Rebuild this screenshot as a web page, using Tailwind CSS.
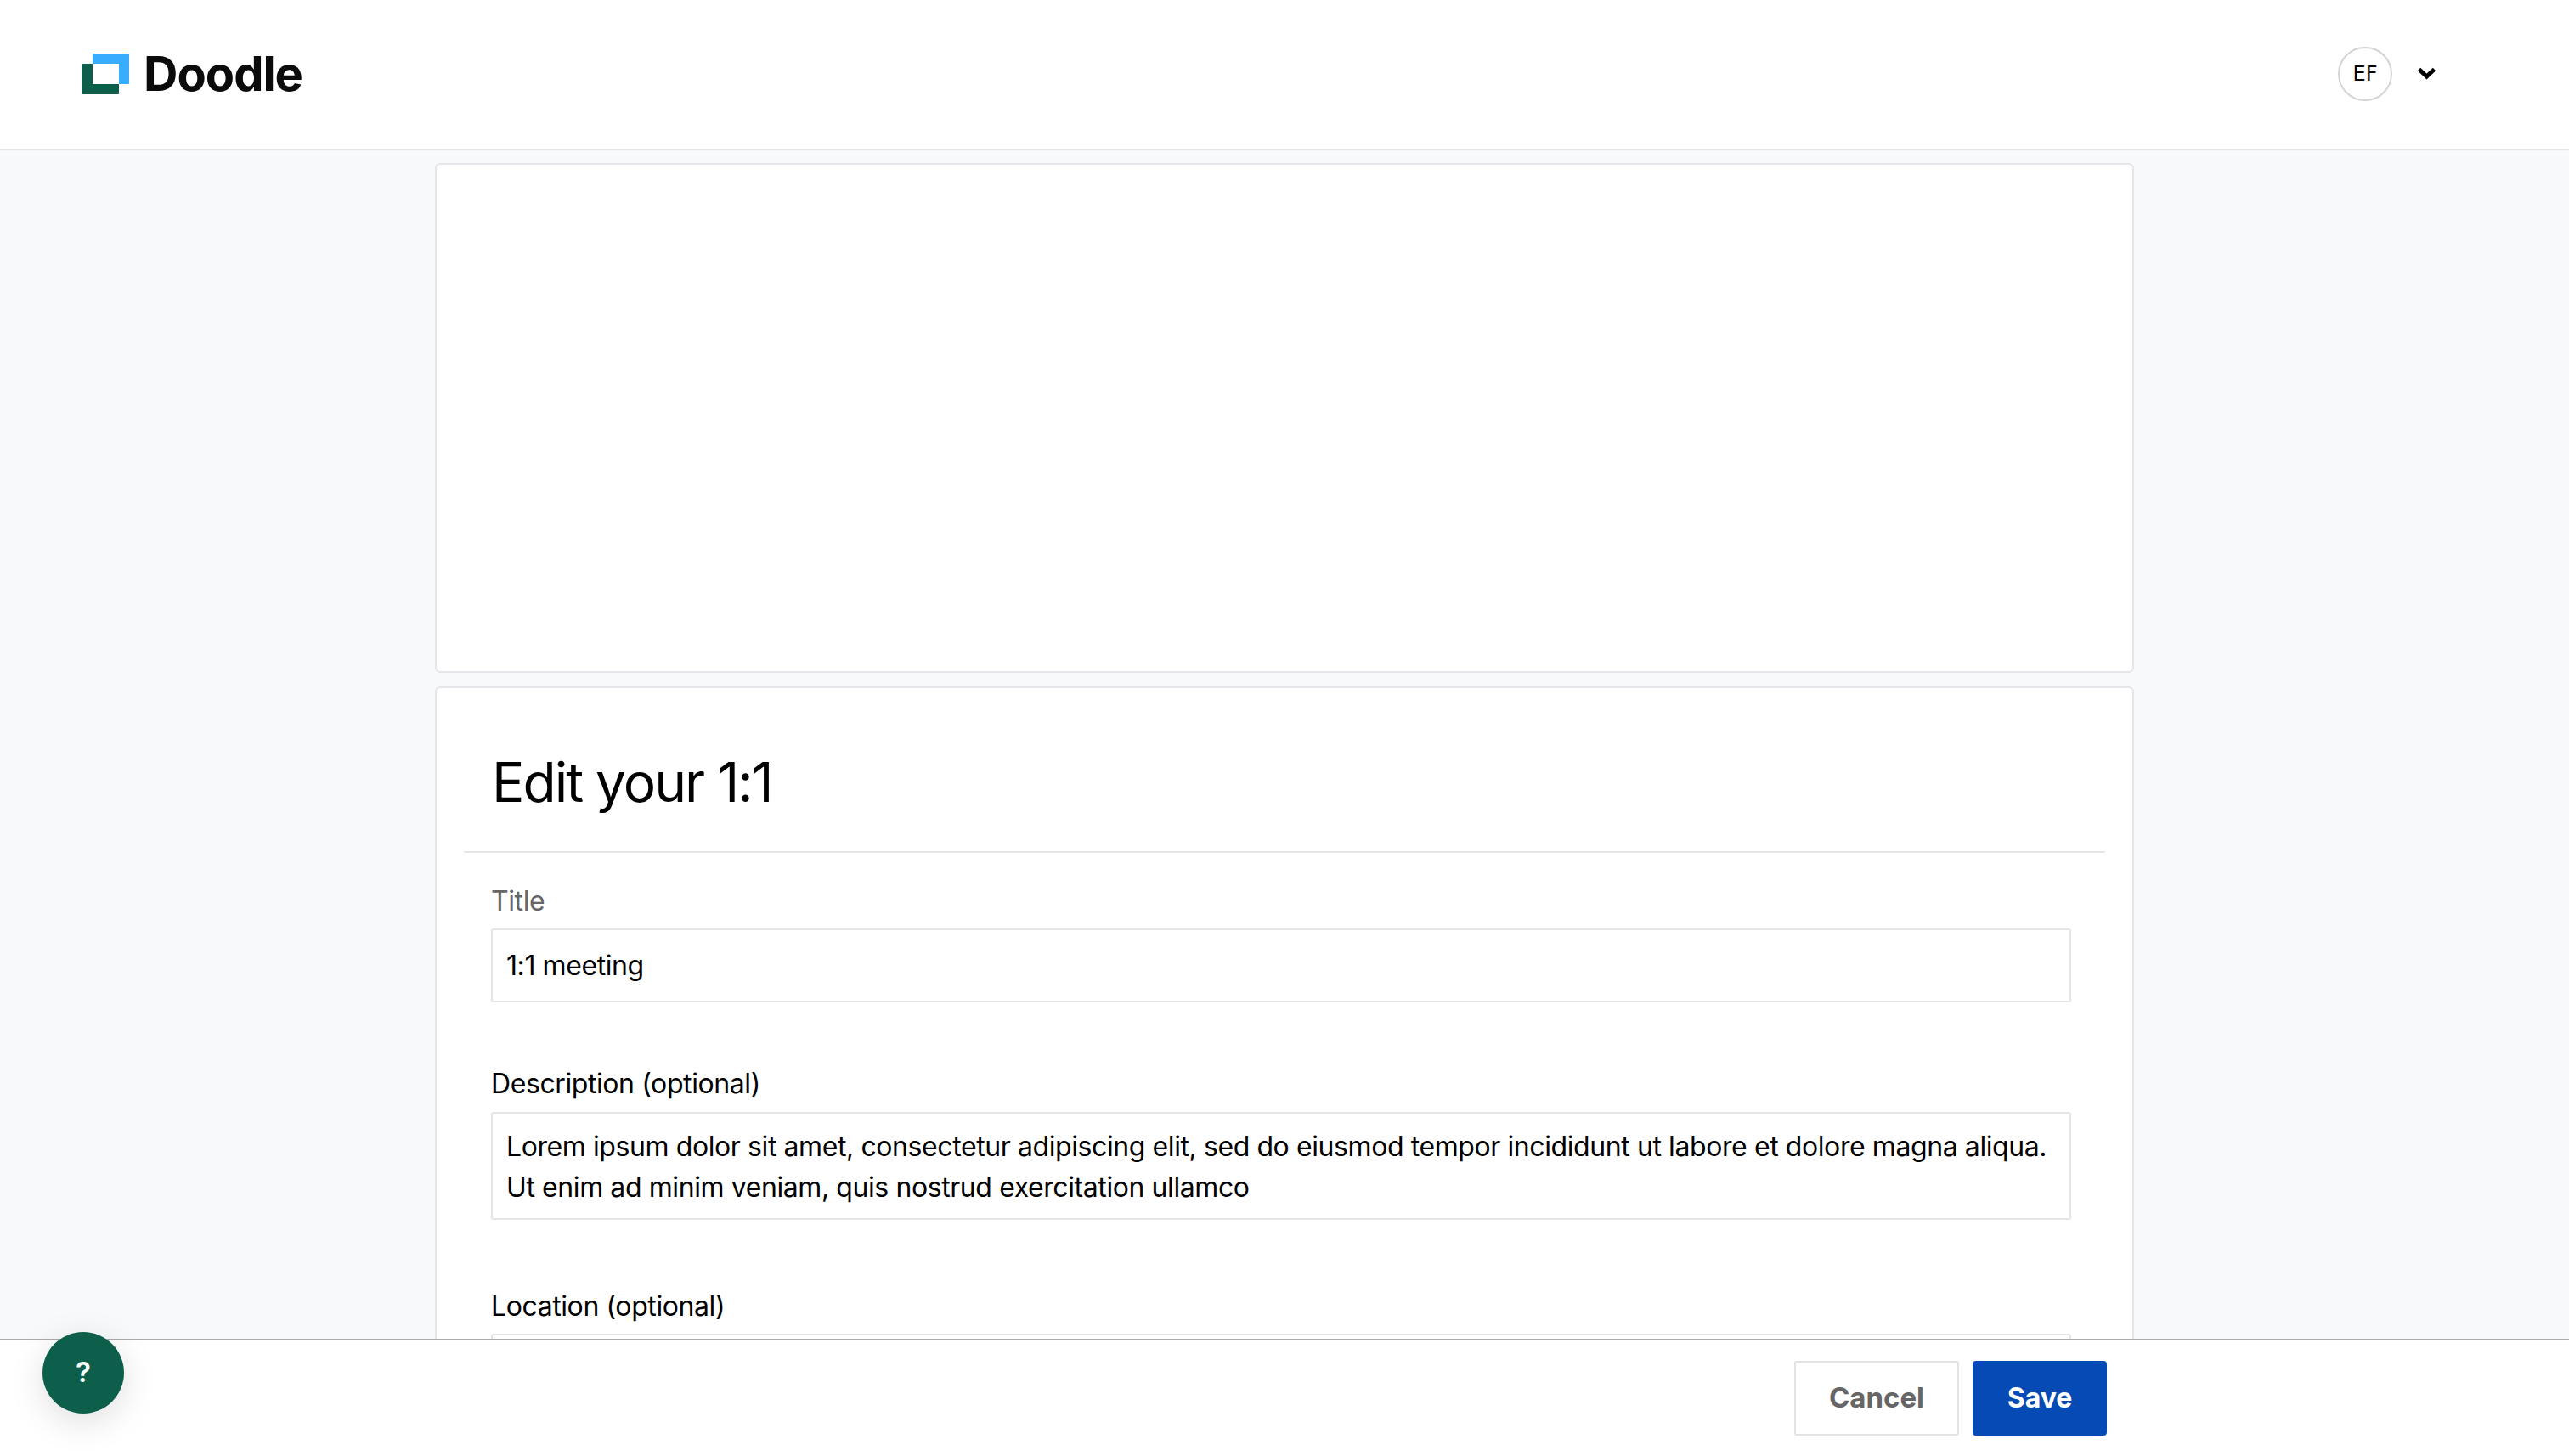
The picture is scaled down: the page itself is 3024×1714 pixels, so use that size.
<!DOCTYPE html>
<html lang="en">
<head>
<meta charset="utf-8">
<title>Doodle - Edit your 1:1</title>
<script src="https://cdn.jsdelivr.net/npm/@tailwindcss/browser@4"></script>
</head>
<body class="font-['Inter',sans-serif] text-black bg-[#f8f9fa]">
<div class="relative h-[1714px] w-[3024px] overflow-hidden flex flex-col">

    <!-- header -->
    <header class="h-[177px] shrink-0 bg-white border-b-2 border-[#e3e5e8] flex items-center justify-between pl-[96px] pr-[156px] pb-[2px]">
        <div class="flex items-center">
            <svg class="w-[56px] h-[48px]" viewBox="0 0 56 48">
                <path d="M0 13a1 1 0 0 1 1-1h43v35a1 1 0 0 1-1 1H1a1 1 0 0 1-1-1z" fill="#0d5f4b"/>
                <path d="M13 1a1 1 0 0 1 1-1h41a1 1 0 0 1 1 1v34a1 1 0 0 1-1 1H13z" fill="#38acff"/>
                <rect x="13" y="12" width="31" height="24" fill="#fff"/>
            </svg>
            <span class="ml-[17px] text-[56px] leading-none font-bold tracking-[-1px] text-[#0b0b0b]">Doodle</span>
        </div>
        <div class="flex items-center gap-[29px]">
            <div class="w-[64px] h-[64px] rounded-full border-2 border-[#d4d4d4] flex items-center justify-center text-[24px] font-['DejaVu_Sans',sans-serif]">EF</div>
            <svg class="w-[23px] h-[15px]" viewBox="0 0 23 15"><path d="M2.5 2.5 11.5 11 20.5 2.5" fill="none" stroke="#000" stroke-width="5"/></svg>
        </div>
    </header>

    <!-- scrolling content -->
    <main class="flex-1 min-h-0 overflow-hidden pt-[15px]">
        <div class="w-[2000px] mx-auto flex flex-col gap-[16px]">
            <div class="h-[600px] bg-white border-2 border-[#e3e5e8] rounded-[6px]"></div>
            <section class="bg-white border-2 border-[#e3e5e8] rounded-[6px] px-[32px] pb-[40px]">
                <div class="border-b-2 border-[#e3e5e8] pl-[33px] pt-[73px] pb-[43px]">
                    <h1 class="text-[64px] leading-[76px] tracking-[-2px]">Edit your 1:1</h1>
                </div>
                <form class="pl-[32px] pr-[40px] pt-[33px] text-[32px] tracking-[-0.41px]">
                    <label class="block leading-[48px] mb-[8px] text-[#666]">Title</label>
                    <div class="h-[87px] border-2 border-[#e3e5e8] rounded-[3px] flex items-center px-[16px]">1:1 meeting</div>
                    <label class="block leading-[48px] mt-[72px] mb-[9px]">Description (optional)</label>
                    <div class="h-[127px] border-2 border-[#e3e5e8] rounded-[3px] px-[16px] py-[15px] leading-[48px]">
                        <p class="whitespace-nowrap">Lorem ipsum dolor sit amet, consectetur adipiscing elit, sed do eiusmod tempor incididunt ut labore et dolore magna aliqua.</p>
                        <p class="whitespace-nowrap">Ut enim ad minim veniam, quis nostrud exercitation ullamco</p>
                    </div>
                    <label class="block leading-[48px] mt-[78px] mb-[8px]">Location (optional)</label>
                    <div class="h-[85px] border-2 border-[#e3e5e8] rounded-[3px]"></div>
                </form>
            </section>
        </div>
    </main>

    <!-- action bar -->
    <footer class="h-[138px] shrink-0 bg-white border-t-2 border-[#aaaaaa] flex justify-end gap-[16px] pt-[24px] pr-[544px] z-10">
        <button class="w-[194px] h-[88px] bg-white border-2 border-[#e3e3e3] rounded-[3px] text-[33px] font-bold text-[#666]">Cancel</button>
        <button class="w-[158px] h-[88px] bg-[#054ab5] rounded-[4px] text-[32px] font-bold text-white">Save</button>
    </footer>

    <!-- help bubble -->
    <button class="absolute left-[50px] top-[1568px] z-20 w-[96px] h-[96px] rounded-full bg-[#0d5f4b] text-white text-[33px] font-semibold shadow-[0_10px_40px_rgba(0,0,0,0.13)]">?</button>
</div>
</body>
</html>
